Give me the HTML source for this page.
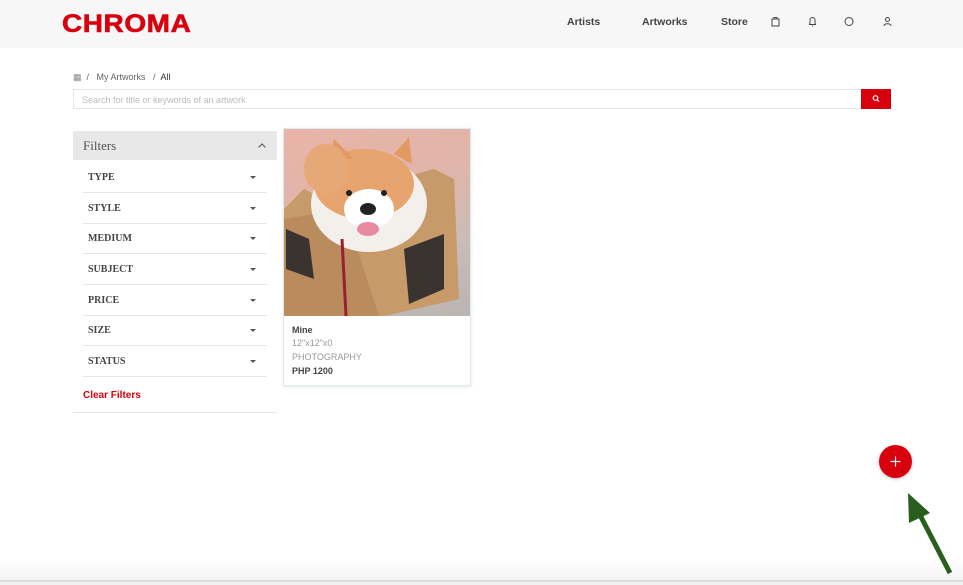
<!DOCTYPE html>
<html><head><meta charset="utf-8"><style>
*{margin:0;padding:0;box-sizing:border-box}
body{width:963px;height:585px;background:#fff;font-family:"Liberation Sans",sans-serif;position:relative;overflow:hidden}
.hdr{position:absolute;left:0;top:0;width:963px;height:48px;background:#f7f7f7}
.logo{position:absolute;left:62px;top:10px;font-size:25px;font-weight:bold;color:#d9000d;letter-spacing:0.5px;transform:scaleX(1.12);transform-origin:left top;-webkit-text-stroke:0.6px #d9000d}
.nav{position:absolute;top:16px;font-size:10.5px;font-weight:bold;color:#444}
.ic{position:absolute;top:16px}
.bc{position:absolute;left:73px;top:72px;font-size:9px;color:#666}
.search{position:absolute;left:73px;top:89px;width:789px;height:20px;border:1px solid #e6e6e6;font-size:9px;color:#bbb;padding:5px 8px}
.sbtn{position:absolute;left:861px;top:89px;width:30px;height:20px;background:#d9000d}
.fh{position:absolute;left:73px;top:131px;width:204px;height:29px;background:#e8e8e8;font-family:"Liberation Serif",serif;font-size:13px;color:#555;padding:7px 10px}
.fi{position:absolute;left:83px;width:184px;height:31px;border-bottom:1px solid #e6e6e6;font-family:"Liberation Serif",serif;font-weight:bold;font-size:10px;color:#444;padding-left:5px;line-height:31px}
.fi:after{content:"";position:absolute;right:11px;top:14px;border-left:3px solid transparent;border-right:3px solid transparent;border-top:3px solid #555}
.clr{position:absolute;left:83px;top:390px;font-size:10px;font-weight:bold;color:#d9000d}
.card{position:absolute;left:283px;top:128px;width:188px;height:258px;border:1px solid #dcecef;box-shadow:0 1px 3px rgba(0,0,0,.1)}
.img{position:absolute;left:0;top:0;width:186px;height:187px;overflow:hidden;background:linear-gradient(160deg,#e9b3a8 0%,#dfb5aa 40%,#c9bcb8 70%,#b9b4b2 100%)}
.t{position:absolute;left:8px;font-size:9px}
</style></head><body>
<div class="hdr"></div>
<div class="logo">CHROMA</div>
<div class="nav" style="left:567px">Artists</div>
<div class="nav" style="left:642px">Artworks</div>
<div class="nav" style="left:721px">Store</div>
<svg class="ic" style="left:771px" width="9" height="11" viewBox="0 0 9 11"><rect x="1" y="3" width="7" height="7" fill="none" stroke="#444"/><path d="M3 3V1.5h3V3" fill="none" stroke="#444"/></svg>
<svg class="ic" style="left:808px" width="9" height="11" viewBox="0 0 9 11"><path d="M1.5 8.5h6L7 7V4a2.5 2.5 0 0 0-5 0v3z M4 10h1" fill="none" stroke="#444"/></svg>
<svg class="ic" style="left:844px" width="10" height="11" viewBox="0 0 10 11"><ellipse cx="5" cy="5.5" rx="4" ry="4" fill="none" stroke="#444"/></svg>
<svg class="ic" style="left:883px" width="9" height="11" viewBox="0 0 9 11"><circle cx="4.5" cy="3.5" r="2" fill="none" stroke="#444"/><path d="M1 10c0-3 7-3 7 0" fill="none" stroke="#444"/></svg>
<div class="bc"><span style="color:#888">&#9638;</span> &nbsp;/ &nbsp; My Artworks &nbsp; / &nbsp;<span style="color:#333">All</span></div>
<div class="search">Search for title or keywords of an artwork</div>
<div class="sbtn"><svg width="30" height="20" viewBox="0 0 30 20"><circle cx="14.5" cy="9" r="2.3" fill="none" stroke="#fff" stroke-width="1.2"/><path d="M16 10.5l2 2" stroke="#fff" stroke-width="1.2"/></svg></div>
<div class="fh">Filters<svg style="position:absolute;right:11px;top:12px" width="8" height="5" viewBox="0 0 8 5"><path d="M0.5 4.5L4 1l3.5 3.5" fill="none" stroke="#555"/></svg></div>
<div class="fi" style="top:162px">TYPE</div>
<div class="fi" style="top:193px">STYLE</div>
<div class="fi" style="top:223px">MEDIUM</div>
<div class="fi" style="top:254px">SUBJECT</div>
<div class="fi" style="top:285px">PRICE</div>
<div class="fi" style="top:315px">SIZE</div>
<div class="fi" style="top:346px">STATUS</div>
<div class="clr">Clear Filters</div>
<div style="position:absolute;left:73px;top:412px;width:204px;border-top:1px solid #e6e6e6"></div>
<div class="card">
<div class="img"><svg width="186" height="187" viewBox="0 0 186 187">
<path d="M0 80 L20 60 L40 70 L150 40 L170 50 L175 170 L100 187 L0 187Z" fill="#c79a6a"/>
<path d="M0 90 L0 187 L95 187 L60 80 Z" fill="#b98b5d"/>
<path d="M2 100 L25 110 L30 150 L2 140Z" fill="#3a3330"/>
<path d="M120 120 L160 105 L160 160 L125 175Z" fill="#3a3330"/>
<ellipse cx="85" cy="75" rx="58" ry="48" fill="#f3f0ec"/>
<ellipse cx="80" cy="55" rx="50" ry="35" fill="#e8a46e"/>
<path d="M45 30 L50 10 L70 30Z M110 25 L125 8 L128 35Z" fill="#e39a62"/>
<ellipse cx="42" cy="40" rx="22" ry="25" fill="#e6a877"/>
<ellipse cx="85" cy="80" rx="25" ry="20" fill="#fff"/>
<circle cx="65" cy="64" r="3" fill="#222"/><circle cx="100" cy="64" r="3" fill="#222"/>
<ellipse cx="84" cy="80" rx="8" ry="6" fill="#222"/>
<ellipse cx="84" cy="100" rx="11" ry="7" fill="#e98aa0"/>
<path d="M58 110 L62 187" stroke="#9a2030" stroke-width="3"/>
</svg></div>
<div class="t" style="top:196px;font-weight:bold;color:#444">Mine</div>
<div class="t" style="top:209px;color:#999">12"x12"x0</div>
<div class="t" style="top:223px;color:#999">PHOTOGRAPHY</div>
<div class="t" style="top:237px;font-weight:bold;color:#444">PHP 1200</div>
</div>
<div style="position:absolute;left:0;top:560px;width:963px;height:25px;background:linear-gradient(#fff,#f0f0f0)"></div>
<div style="position:absolute;left:0;top:580px;width:963px;height:2px;background:#ddd"></div>
<div style="position:absolute;left:879px;top:445px;width:33px;height:33px;border-radius:50%;background:#d9000d;box-shadow:0 1px 3px rgba(0,0,0,.25)"><svg width="33" height="33"><path d="M16.5 11.5v10M11.5 16.5h10" stroke="#fff" stroke-width="1.2"/></svg></div>
<svg style="position:absolute;left:900px;top:485px" width="63" height="100" viewBox="0 0 63 100"><path d="M50 88 L20 30" stroke="#2a5e1c" stroke-width="5"/><path d="M8 8 L30 28 L9 38Z" fill="#2a5e1c"/></svg>
</body></html>
